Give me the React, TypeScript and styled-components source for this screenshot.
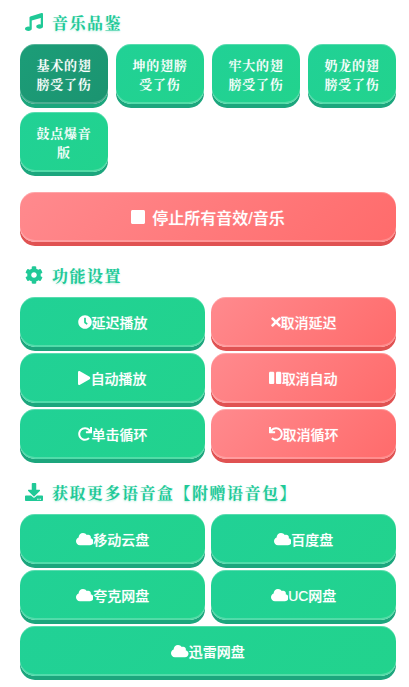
import React from 'react'
import styled, { createGlobalStyle, css } from 'styled-components'
import {
  FaMusic,
  FaStop,
  FaCog,
  FaClock,
  FaTimes,
  FaPlay,
  FaPause,
  FaRedo,
  FaUndo,
  FaDownload,
  FaCloud,
} from 'react-icons/fa'

const GlobalStyle = createGlobalStyle`
  html, body {
    margin: 0;
    padding: 0;
    background: #fff;
    overflow: hidden;
  }
  body {
    font-family: "Liberation Sans", "Noto Sans CJK SC", sans-serif;
  }
`

const Page = styled.div`
  width: 409px;
  height: 687px;
  box-sizing: border-box;
  padding: 10px 13px 0 20px;
`

const Section = styled.section<{ $tight?: boolean }>`
  margin-bottom: ${({ $tight }) => ($tight ? '20px' : '21px')};
`

const Heading = styled.h3`
  display: flex;
  align-items: center;
  gap: 9px;
  height: 24px;
  margin: 0 0 10px;
  padding-left: 5px;
  color: #20c997;
  font-family: "Noto Serif CJK SC", "Noto Sans CJK SC", serif;
  font-size: 16px;
  font-weight: 700;
  letter-spacing: 1.5px;
  text-shadow: 0 1px 2px rgba(32, 201, 151, 0.3);
  svg {
    width: 18px;
    height: 18px;
    flex: none;
  }
`

const SoundGrid = styled.div`
  display: grid;
  grid-template-columns: repeat(4, 88px);
  gap: 8px;
`

const Grid = styled.div`
  display: grid;
  grid-template-columns: repeat(2, 185px);
  gap: 6px;
`

const green = css`
  background: linear-gradient(135deg, #21d196, #22d38d);
  box-shadow: 0 4px 0 #1ca67d, inset 0 -2px 0 rgba(255, 255, 255, 0.22),
    inset 0 1px 0 rgba(255, 255, 255, 0.25);
`

const red = css`
  background: linear-gradient(135deg, #ff8a8e, #ff6b6b);
  box-shadow: 0 4px 0 #e05252, inset 0 -2px 0 rgba(255, 255, 255, 0.22),
    inset 0 1px 0 rgba(255, 255, 255, 0.25);
`

const SoundButton = styled.button<{ $active?: boolean }>`
  ${green}
  height: 60px;
  padding: 0 10px;
  border: 0;
  border-radius: 15px;
  color: #fff;
  font-family: "Noto Serif CJK SC", "Noto Sans CJK SC", serif;
  font-size: 13px;
  font-weight: 600;
  line-height: 19px;
  letter-spacing: 0.75px;
  text-shadow: 0 0 1px rgba(255, 255, 255, 0.5);
  ${({ $active }) =>
    $active &&
    css`
      background: linear-gradient(135deg, #1c9d78, #1b9470);
    `}
`

const ActionButton = styled.button<{ $tone?: 'green' | 'red'; $wide?: boolean }>`
  ${({ $tone }) => ($tone === 'red' ? red : green)}
  display: flex;
  align-items: center;
  justify-content: center;
  height: 50px;
  padding: 0;
  border: 0;
  border-radius: 15px;
  color: #fff;
  font-family: "Liberation Sans", "Noto Sans CJK SC", sans-serif;
  font-size: 14px;
  font-weight: 500;
  text-shadow: 0 0 1px rgba(255, 255, 255, 0.5);
  ${({ $wide }) => $wide && 'grid-column: 1 / -1;'}
  svg {
    height: 14px;
    flex: none;
  }
`

const StopButton = styled(ActionButton)`
  width: 100%;
  gap: 7px;
  font-size: 16px;
  font-weight: 500;
  svg {
    height: 16px;
  }
`

// the icon font gives each glyph its own advance, so the boxes are not all square
const CloudIcon = styled(FaCloud)`
  width: 17.5px;
`

const TimesIcon = styled(FaTimes)`
  width: 10px;
`

const PlayIcon = styled(FaPlay)`
  width: 12.25px;
`

const PauseIcon = styled(FaPause)`
  width: 12.25px;
`

const StopIcon = styled(FaStop)`
  width: 14px;
`

const sounds = ['基术的翅膀受了伤', '坤的翅膀受了伤', '牢大的翅膀受了伤', '奶龙的翅膀受了伤', '鼓点爆音版']

const settings = [
  { icon: <FaClock />, label: '延迟播放', tone: 'green' },
  { icon: <TimesIcon />, label: '取消延迟', tone: 'red' },
  { icon: <PlayIcon />, label: '自动播放', tone: 'green' },
  { icon: <PauseIcon />, label: '取消自动', tone: 'red' },
  { icon: <FaRedo />, label: '单击循环', tone: 'green' },
  { icon: <FaUndo />, label: '取消循环', tone: 'red' },
] as const

const drives = ['移动云盘', '百度盘', '夸克网盘', 'UC网盘']

export default function App() {
  return (
    <Page>
      <GlobalStyle />
      <Section $tight>
        <Heading>
          <FaMusic />
          音乐品鉴
        </Heading>
        <SoundGrid>
          {sounds.map((name, i) => (
            <SoundButton key={name} $active={i === 0}>
              {name}
            </SoundButton>
          ))}
        </SoundGrid>
      </Section>

      <Section>
        <StopButton $tone="red">
          <StopIcon />
          停止所有音效/音乐
        </StopButton>
      </Section>

      <Section>
        <Heading>
          <FaCog />
          功能设置
        </Heading>
        <Grid>
          {settings.map((item) => (
            <ActionButton key={item.label} $tone={item.tone}>
              {item.icon}
              {item.label}
            </ActionButton>
          ))}
        </Grid>
      </Section>

      <Section>
        <Heading>
          <FaDownload />
          获取更多语音盒【附赠语音包】
        </Heading>
        <Grid>
          {drives.map((name) => (
            <ActionButton key={name}>
              <CloudIcon />
              {name}
            </ActionButton>
          ))}
          <ActionButton $wide>
            <CloudIcon />
            迅雷网盘
          </ActionButton>
        </Grid>
      </Section>
    </Page>
  )
}
